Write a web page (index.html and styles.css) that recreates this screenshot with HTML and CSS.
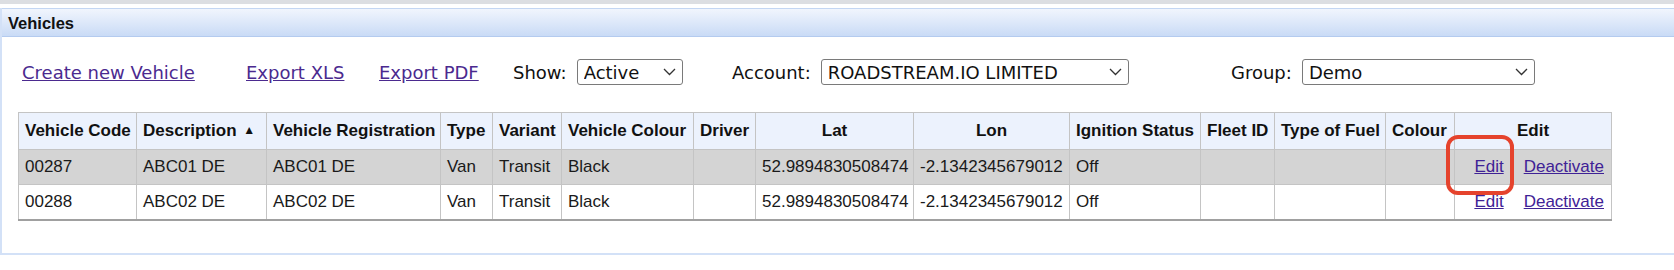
FILE: index.html
```html
<!DOCTYPE html>
<html lang="en">
<head>
    <meta charset="UTF-8">
    <title>Vehicles</title>
    <link rel="stylesheet" href="styles.css">
</head>
<body>

<div class="topBar"></div>

<div class="panel">
    <div class="panelHead">Vehicles</div>

    <!--Links and filters above the vehicle list-->
    <div class="toolbar">
        <div class="toolCell cellCreate"><a href="#">Create new Vehicle</a></div>
        <div class="toolCell cellXls"><a href="#">Export XLS</a></div>
        <div class="toolCell cellPdf"><a href="#">Export PDF</a></div>
        <div class="toolCell cellShow">
            Show:
            <span class="selectBox showSelect">
                <select><option>Active</option><option>Inactive</option></select>
                <svg class="chevron" width="13" height="8" viewBox="0 0 13 8"><polyline points="1,1 6.5,6.5 12,1" fill="none" stroke="#333" stroke-width="1.3"/></svg>
            </span>
        </div>
        <div class="toolCell cellAccount">
            Account:
            <span class="selectBox accountSelect">
                <select><option>ROADSTREAM.IO LIMITED</option></select>
                <svg class="chevron" width="13" height="8" viewBox="0 0 13 8"><polyline points="1,1 6.5,6.5 12,1" fill="none" stroke="#333" stroke-width="1.3"/></svg>
            </span>
        </div>
        <div class="toolCell cellGroup">
            Group:
            <span class="selectBox groupSelect">
                <select><option>Demo</option></select>
                <svg class="chevron" width="13" height="8" viewBox="0 0 13 8"><polyline points="1,1 6.5,6.5 12,1" fill="none" stroke="#333" stroke-width="1.3"/></svg>
            </span>
        </div>
    </div>

    <!--The list of vehicles-->
    <div class="tableWrap">
        <table class="vehicleTable">
            <colgroup>
                <col class="cCode">
                <col class="cDesc">
                <col class="cReg">
                <col class="cType">
                <col class="cVariant">
                <col class="cVColour">
                <col class="cDriver">
                <col class="cLat">
                <col class="cLon">
                <col class="cIgn">
                <col class="cFleet">
                <col class="cFuel">
                <col class="cColour">
                <col class="cEdit">
            </colgroup>
            <tr>
                <th>Vehicle Code</th>
                <th>Description <span class="sortArrow">&#9650;</span></th>
                <th>Vehicle Registration</th>
                <th>Type</th>
                <th>Variant</th>
                <th>Vehicle Colour</th>
                <th>Driver</th>
                <th class="center">Lat</th>
                <th class="center">Lon</th>
                <th>Ignition Status</th>
                <th>Fleet ID</th>
                <th>Type of Fuel</th>
                <th>Colour</th>
                <th class="center">Edit</th>
            </tr>
            <tr class="selectedRow">
                <td>00287</td>
                <td>ABC01 DE</td>
                <td>ABC01 DE</td>
                <td>Van</td>
                <td>Transit</td>
                <td>Black</td>
                <td></td>
                <td>52.9894830508474</td>
                <td>-2.1342345679012</td>
                <td>Off</td>
                <td></td>
                <td></td>
                <td></td>
                <td class="actions"><a href="#">Edit</a><a href="#" class="deactivate">Deactivate</a></td>
            </tr>
            <tr>
                <td>00288</td>
                <td>ABC02 DE</td>
                <td>ABC02 DE</td>
                <td>Van</td>
                <td>Transit</td>
                <td>Black</td>
                <td></td>
                <td>52.9894830508474</td>
                <td>-2.1342345679012</td>
                <td>Off</td>
                <td></td>
                <td></td>
                <td></td>
                <td class="actions"><a href="#">Edit</a><a href="#" class="deactivate">Deactivate</a></td>
            </tr>
        </table>
        <!--red mark round the first Edit link-->
        <div class="markBox"></div>
    </div>
</div>

</body>
</html>
```

FILE: styles.css
```css
/*CSS for whole page*/
body {
    margin: 0;
    background-color: white;
    font-family: "DejaVu Sans", Verdana, sans-serif;
    color: #111;
}

/*grey strip at the very top*/
.topBar {
    height: 4px;
    background-color: #dcdee2;
    margin-bottom: 4px;
}

/*CSS for the panel round the list*/
.panel {
    border-left: 2px solid #d3e1f7;
    border-bottom: 2px solid #d3e1f7;
    padding-bottom: 32px;
}

.panelHead {
    height: 27px;
    border-top: 1px solid #c3d6f3;
    border-bottom: 1px solid #b4cbef;
    background: linear-gradient(#f1f5fd, #c9dbf6);
    padding-left: 6px;
    font-family: "Liberation Sans", Arial, sans-serif;
    font-weight: bold;
    font-size: 16.5px;
    line-height: 28px;
    color: #111;
}

/*CSS for the links and selects*/
.toolbar {
    display: grid;
    grid-template-columns: 224px 133px 134px 219px 499px auto;
    align-items: center;
    height: 26px;
    padding: 22px 0 27px 20px;
    font-size: 18px;
}

.toolCell {
    display: flex;
    align-items: center;
    gap: 10px;
    white-space: nowrap;
}

.toolbar a {
    color: #4b2a8f;
}

.selectBox {
    position: relative;
    display: inline-block;
    height: 26px;
}

.selectBox select {
    appearance: none;
    -webkit-appearance: none;
    height: 26px;
    width: 100%;
    border: 1px solid #7a7a7a;
    border-radius: 3px;
    background-color: white;
    font-family: "DejaVu Sans", Verdana, sans-serif;
    font-size: 18px;
    color: #111;
    padding: 0 0 0 6px;
    margin: 0;
}

.chevron {
    position: absolute;
    right: 7px;
    top: 9px;
    pointer-events: none;
}

.showSelect {
    width: 106px;
}

.accountSelect {
    width: 308px;
}

.groupSelect {
    width: 233px;
}

/*CSS for the table*/
.tableWrap {
    position: relative;
    margin-left: 16px;
    width: 1594px;
}

.vehicleTable {
    width: 1593px;
    table-layout: fixed;
    border-collapse: collapse;
    border: 1px solid #a8a8a8;
    border-bottom: 2px solid #a0a0a0;
    font-family: "Liberation Sans", Arial, sans-serif;
    font-size: 17px;
}

.vehicleTable th, .vehicleTable td {
    border: 1px solid #c4c4c4;
    padding: 0 6px;
    text-align: left;
    white-space: nowrap;
    overflow: hidden;
}

.vehicleTable th {
    height: 36px;
    background-color: #ecf2fd;
    color: #111;
}

.vehicleTable td {
    height: 34px;
    color: #1a1a1a;
}

.vehicleTable .center {
    text-align: center;
}

.sortArrow {
    font-size: 12px;
    position: relative;
    top: -2px;
    margin-left: 2px;
}

.selectedRow {
    background-color: #d4d4d4;
}

.vehicleTable td.actions {
    text-align: right;
    padding-right: 7px;
}

.actions a {
    color: #3f2296;
}

.actions .deactivate {
    margin-left: 20px;
}

.cCode { width: 118px; }
.cDesc { width: 130px; }
.cReg { width: 174px; }
.cType { width: 52px; }
.cVariant { width: 69px; }
.cVColour { width: 132px; }
.cDriver { width: 62px; }
.cLat { width: 158px; }
.cLon { width: 156px; }
.cIgn { width: 131px; }
.cFleet { width: 74px; }
.cFuel { width: 111px; }
.cColour { width: 69px; }
.cEdit { width: 157px; }

/*red rounded mark*/
.markBox {
    position: absolute;
    left: 1428px;
    top: 23px;
    width: 60px;
    height: 52px;
    border: 4px solid #e5432d;
    border-radius: 12px;
}
```
